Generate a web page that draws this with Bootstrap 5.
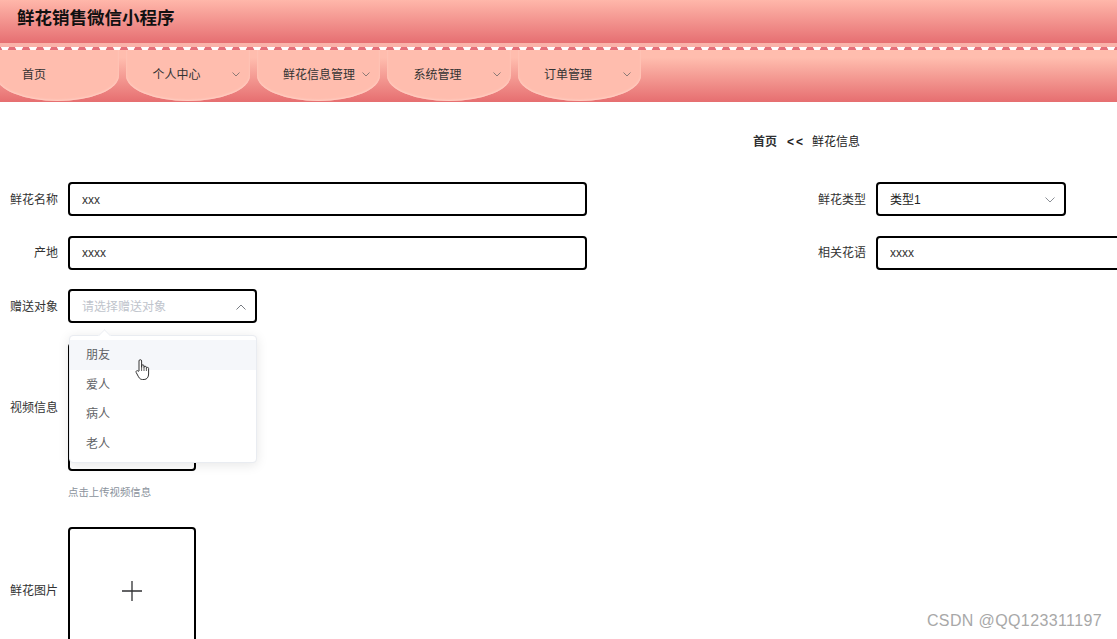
<!DOCTYPE html>
<html lang="zh">
<head>
    <meta charset="UTF-8">
    <meta name="viewport" content="width=device-width, initial-scale=1.0">
    <title>鲜花销售微信小程序</title>
    <link href="https://cdn.jsdelivr.net/npm/bootstrap@5.3.2/dist/css/bootstrap.min.css" rel="stylesheet">
    <style>
        html, body {
            height: 639px;
            overflow: hidden;
        }
        body {
            font-family: "Liberation Sans", "Noto Sans CJK SC", sans-serif;
            font-size: 12px;
            color: #222;
            background: #fff;
            position: relative;
        }
        .top-title {
            height: 43px;
            padding: 8px 0 0 17px;
            font-size: 17.5px;
            line-height: 20px;
            font-weight: 700;
            color: #111;
            background: linear-gradient(180deg, #ffb7aa 0%, #e66f72 100%);
        }
        .top-band {
            height: 4px;
            background: #fab3aa;
        }
        .top-lace {
            height: 3px;
            background-color: #e5707a;
            background-image: radial-gradient(circle at 7px 0, #fff 3.5px, transparent 4px);
            background-size: 14px 3px;
            background-position: -2px 0;
        }
        .menu-bar {
            height: 52px;
            gap: 7px;
            background: linear-gradient(180deg, #ffbdae 0%, #ffbdae 15%, #e66e70 100%);
        }
        .menu-tab {
            width: 123.5px;
            height: 51px;
            flex: none;
            padding-bottom: 1px;
            background: #ffbdae;
            border-radius: 0 0 50% 50% / 0 0 50% 50%;
            box-shadow: inset 0 -1px 2px #ffd0c5;
            color: #333;
            position: relative;
        }
        .menu-tab.first-tab {
            margin-left: -4.5px;
        }
        .tab-text {
            padding-left: 26.5px;
            white-space: nowrap;
        }
        .tab-arrow {
            position: absolute;
            right: 10px;
            top: 22px;
        }
        .crumb-line {
            padding: 32px 0 0 753px;
            height: 80px;
            line-height: 17px;
        }
        .crumb-line b {
            font-weight: 700;
            color: #303133;
        }
        .crumb-sep {
            margin: 0 7px 0 10px;
            font-weight: 700;
            letter-spacing: 2px;
        }
        .form-area {
            gap: 19.5px;
        }
        .form-line {
            height: 34px;
        }
        .field-label {
            width: 58px;
            flex: none;
            text-align: right;
            margin-right: 10px;
            padding-top: 1px;
            color: #333;
            white-space: nowrap;
        }
        .field-label.far-label {
            margin-left: 221px;
        }
        .field-input.form-control {
            height: 34px;
            border: 2px solid #000;
            border-radius: 4px;
            padding: 1px 12px 0;
            font-size: 12px;
            color: #333;
            font-family: inherit;
            box-shadow: none;
        }
        .wide-input {
            flex: none;
            width: 519px !important;
        }
        .right-input {
            flex: none;
            width: 260px !important;
        }
        .pick-box {
            height: 34px;
            border: 2px solid #000;
            border-radius: 4px;
            padding: 1px 9px 0 12px;
            background: #fff;
            flex: none;
        }
        .pick-type {
            width: 190px;
        }
        .pick-who {
            width: 189px;
            color: #c0c4cc;
        }
        .upload-line {
            margin-top: 20px;
        }
        .upload-box {
            width: 128px;
            height: 128px;
            flex: none;
            border: 2px solid #000;
            border-radius: 4px;
            background: #fff;
        }
        .upload-tip {
            padding: 14px 0 0 68px;
            height: 55.5px;
            font-size: 10.4px;
            line-height: 16px;
            color: #8a929c;
        }
        .pick-menu.dropdown-menu {
            position: absolute;
            left: 69px;
            top: 335px;
            width: 188px;
            min-width: 0;
            height: 128px;
            padding: 4px 0;
            margin: 0;
            border: 1px solid #e9ecf1;
            border-radius: 4px;
            box-shadow: 0 2px 12px rgba(0, 0, 0, .1);
            font-size: 12px;
        }
        .pick-menu::before {
            content: "";
            position: absolute;
            left: 30px;
            top: -5px;
            width: 9px;
            height: 9px;
            background: #fff;
            transform: rotate(45deg);
            border-left: 1px solid #eef0f4;
            border-top: 1px solid #eef0f4;
        }
        .pick-menu .dropdown-item {
            position: relative;
            height: 29.5px;
            line-height: 31.5px;
            padding: 0 16px;
            color: #606266;
        }
        .pick-menu .dropdown-item.hover-item {
            background: #f5f7fa;
        }
        .hand-cursor {
            position: absolute;
            left: 134px;
            top: 358px;
            z-index: 1001;
        }
        .mark-text {
            position: absolute;
            right: 15px;
            top: 611px;
            font-size: 16px;
            line-height: 20px;
            color: #a8a8a8;
            letter-spacing: .38px;
            white-space: nowrap;
        }
    </style>
</head>
<body>
    <div class="top-title">鲜花销售微信小程序</div>
    <div class="top-band"></div>
    <div class="top-lace"></div>
    <nav class="menu-bar d-flex">
        <div class="menu-tab first-tab d-flex align-items-center"><span class="tab-text">首页</span></div>
        <div class="menu-tab d-flex align-items-center">
            <span class="tab-text">个人中心</span>
            <svg class="tab-arrow" width="8" height="5" viewBox="0 0 8 5"><path d="M.5 .5L4 4 7.500 .5" fill="none" stroke="#8d7a76" stroke-width="1"/></svg>
        </div>
        <div class="menu-tab d-flex align-items-center">
            <span class="tab-text">鲜花信息管理</span>
            <svg class="tab-arrow" width="8" height="5" viewBox="0 0 8 5"><path d="M.5 .5L4 4 7.500 .5" fill="none" stroke="#8d7a76" stroke-width="1"/></svg>
        </div>
        <div class="menu-tab d-flex align-items-center">
            <span class="tab-text">系统管理</span>
            <svg class="tab-arrow" width="8" height="5" viewBox="0 0 8 5"><path d="M.5 .5L4 4 7.500 .5" fill="none" stroke="#8d7a76" stroke-width="1"/></svg>
        </div>
        <div class="menu-tab d-flex align-items-center">
            <span class="tab-text">订单管理</span>
            <svg class="tab-arrow" width="8" height="5" viewBox="0 0 8 5"><path d="M.5 .5L4 4 7.500 .5" fill="none" stroke="#8d7a76" stroke-width="1"/></svg>
        </div>
    </nav>

    <div class="crumb-line"><b>首页</b><span class="crumb-sep">&lt;&lt;</span>鲜花信息</div>

    <div class="form-area d-flex flex-column">
        <div class="form-line d-flex align-items-center">
            <label class="field-label">鲜花名称</label>
            <input class="form-control field-input wide-input" value="xxx">
            <label class="field-label far-label">鲜花类型</label>
            <div class="pick-box pick-type d-flex align-items-center justify-content-between">
                <span>类型1</span>
                <svg width="10" height="6" viewBox="0 0 10 6"><path d="M.5 .5L5 5 9.500 .5" fill="none" stroke="#8b8f96" stroke-width="1"/></svg>
            </div>
        </div>
        <div class="form-line d-flex align-items-center">
            <label class="field-label">产地</label>
            <input class="form-control field-input wide-input" value="xxxx">
            <label class="field-label far-label">相关花语</label>
            <input class="form-control field-input right-input" value="xxxx">
        </div>
        <div class="form-line d-flex align-items-center">
            <label class="field-label">赠送对象</label>
            <div class="pick-box pick-who d-flex align-items-center justify-content-between">
                <span>请选择赠送对象</span>
                <svg width="10" height="6" viewBox="0 0 10 6"><path d="M.5 5.500L5 1l4.500 4.500" fill="none" stroke="#777b82" stroke-width="1"/></svg>
            </div>
        </div>
    </div>

    <div class="upload-line d-flex align-items-center">
        <label class="field-label">视频信息</label>
        <div class="upload-box"></div>
    </div>
    <div class="upload-tip">点击上传视频信息</div>
    <div class="d-flex align-items-center">
        <label class="field-label">鲜花图片</label>
        <div class="upload-box d-flex align-items-center justify-content-center">
            <svg width="20" height="20" viewBox="0 0 20 20"><path d="M0 10h20M10 0v20" stroke="#303133" stroke-width="1.3"/></svg>
        </div>
    </div>

    <ul class="dropdown-menu show pick-menu list-unstyled">
        <li class="dropdown-item hover-item">朋友</li>
        <li class="dropdown-item">爱人</li>
        <li class="dropdown-item">病人</li>
        <li class="dropdown-item">老人</li>
    </ul>

    <svg class="hand-cursor" width="18" height="23" viewBox="0 0 17 23">
        <path d="M4.500 13V3a1.300 1.300 0 0 1 2.600 0v6.500V8a1.200 1.200 0 0 1 2.400 0v1.500a1.200 1.200 0 0 1 2.400 0v1a1.100 1.100 0 0 1 2.200 0V16c0 3-1.600 5.500-4.500 5.500H8c-2 0-3-1-4-2.700L1.700 14.500c-.8-1.500 1.200-2.700 2.100-1.200z" fill="#fff" stroke="#333" stroke-width="1"/>
        <path d="M7.100 9.500V13M9.500 9.500V13M11.900 10.500V13" fill="none" stroke="#333" stroke-width=".8"/>
    </svg>

    <div class="mark-text">CSDN @QQ123311197</div>

    <script src="https://cdn.jsdelivr.net/npm/bootstrap@5.3.2/dist/js/bootstrap.bundle.min.js"></script>
</body>
</html>
